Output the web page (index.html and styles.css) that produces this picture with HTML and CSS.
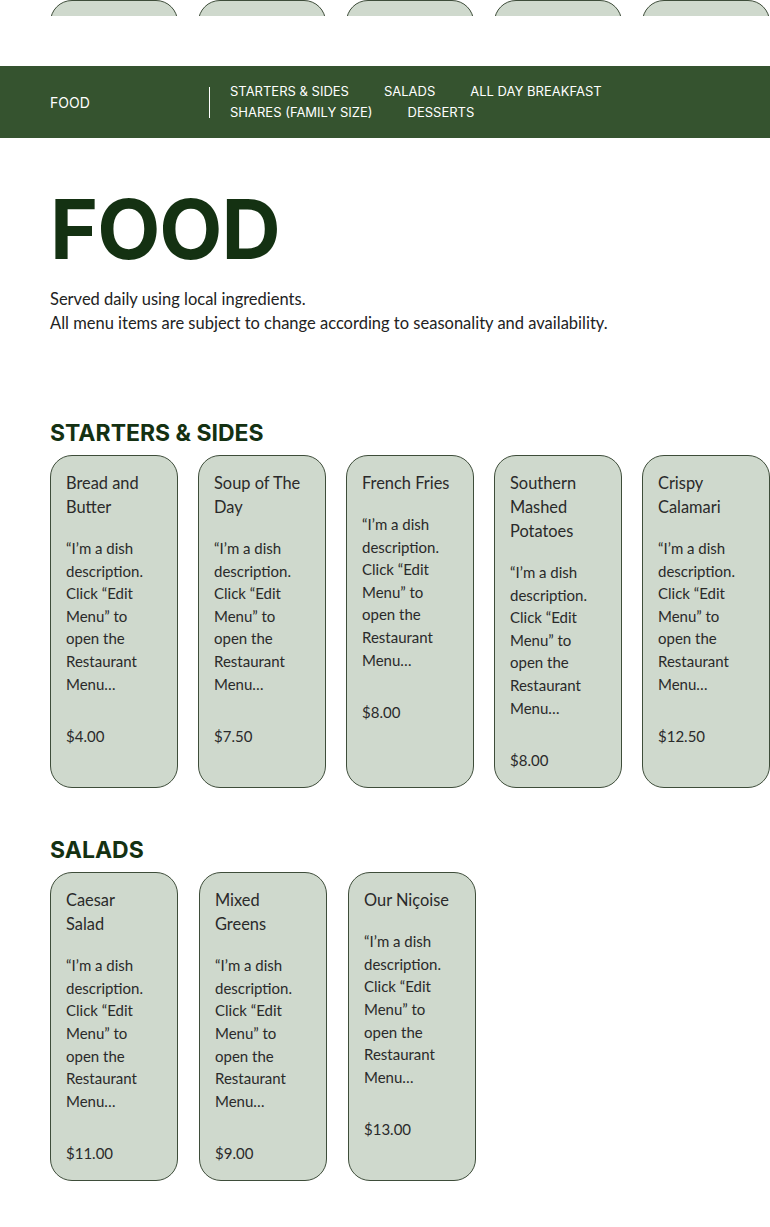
FILE: index.html
```html
<!DOCTYPE html>
<html lang="en">
<head>
<meta charset="utf-8">
<title>Food Menu</title>
<link rel="stylesheet" href="styles.css">
</head>
<body>
  <div class="prev-row">
    <div class="card-stub"></div>
    <div class="card-stub"></div>
    <div class="card-stub"></div>
    <div class="card-stub"></div>
    <div class="card-stub"></div>
  </div>

  <nav class="menu-nav">
    <div class="menu-nav__current">FOOD</div>
    <div class="menu-nav__divider"></div>
    <div class="menu-nav__links">
      <a class="menu-nav__link">STARTERS &amp; SIDES</a>
      <a class="menu-nav__link">SALADS</a>
      <a class="menu-nav__link">ALL DAY BREAKFAST</a>
      <a class="menu-nav__link">SHARES (FAMILY SIZE)</a>
      <a class="menu-nav__link">DESSERTS</a>
    </div>
  </nav>

  <main class="menu">
    <header class="menu__intro">
      <h1 class="menu__title">FOOD</h1>
      <p class="menu__desc">Served daily using local ingredients.<br>All menu items are subject to change according to seasonality and availability.</p>
    </header>

    <section class="menu-section">
      <h2 class="menu-section__title">STARTERS &amp; SIDES</h2>
      <div class="dish-grid">
        <article class="dish">
          <h3 class="dish__name">Bread and Butter</h3>
          <p class="dish__text">“I’m a dish description. Click “Edit Menu” to open the Restaurant Menu…</p>
          <p class="dish__price">$4.00</p>
        </article>
        <article class="dish">
          <h3 class="dish__name">Soup of The Day</h3>
          <p class="dish__text">“I’m a dish description. Click “Edit Menu” to open the Restaurant Menu…</p>
          <p class="dish__price">$7.50</p>
        </article>
        <article class="dish">
          <h3 class="dish__name">French Fries</h3>
          <p class="dish__text">“I’m a dish description. Click “Edit Menu” to open the Restaurant Menu…</p>
          <p class="dish__price">$8.00</p>
        </article>
        <article class="dish">
          <h3 class="dish__name">Southern Mashed Potatoes</h3>
          <p class="dish__text">“I’m a dish description. Click “Edit Menu” to open the Restaurant Menu…</p>
          <p class="dish__price">$8.00</p>
        </article>
        <article class="dish">
          <h3 class="dish__name">Crispy Calamari</h3>
          <p class="dish__text">“I’m a dish description. Click “Edit Menu” to open the Restaurant Menu…</p>
          <p class="dish__price">$12.50</p>
        </article>
      </div>
    </section>

    <section class="menu-section menu-section--salads">
      <h2 class="menu-section__title">SALADS</h2>
      <div class="dish-grid dish-grid--wide">
        <article class="dish">
          <h3 class="dish__name">Caesar Salad</h3>
          <p class="dish__text">“I’m a dish description. Click “Edit Menu” to open the Restaurant Menu…</p>
          <p class="dish__price">$11.00</p>
        </article>
        <article class="dish">
          <h3 class="dish__name">Mixed Greens</h3>
          <p class="dish__text">“I’m a dish description. Click “Edit Menu” to open the Restaurant Menu…</p>
          <p class="dish__price">$9.00</p>
        </article>
        <article class="dish">
          <h3 class="dish__name">Our Niçoise</h3>
          <p class="dish__text">“I’m a dish description. Click “Edit Menu” to open the Restaurant Menu…</p>
          <p class="dish__price">$13.00</p>
        </article>
      </div>
    </section>
  </main>
</body>
</html>
```

FILE: styles.css
```css
* { box-sizing: border-box; }

html, body {
  margin: 0;
  padding: 0;
  background: #ffffff;
}

body {
  font-family: "Lato", "Noto Sans", sans-serif;
  color: #2a2a2a;
  overflow-x: hidden;
}

/* partially visible row from the previous section */
.prev-row {
  height: 16px;
  overflow: hidden;
  display: grid;
  grid-template-columns: repeat(5, 128px);
  column-gap: 20px;
  align-items: end;
  padding-left: 50px;
  width: 770px;
}

.card-stub {
  height: 200px;
  background: #cfd9cd;
  border: 1px solid #3e4d3a;
  border-radius: 22px;
}

/* nav bar */
.menu-nav {
  margin-top: 50px;
  height: 72px;
  background: #35532f;
  display: flex;
  align-items: center;
  padding-left: 50px;
  color: #ffffff;
  font-family: "Inter", "Noto Sans", sans-serif;
}

.menu-nav__current {
  width: 159px;
  font-size: 14px;
}

.menu-nav__divider {
  width: 1px;
  height: 31px;
  background: #ffffff;
  margin-right: 20px;
}

.menu-nav__links {
  display: flex;
  flex-wrap: wrap;
  column-gap: 35px;
  width: 450px;
  font-size: 13px;
  line-height: 21px;
}

.menu-nav__link {
  color: #ffffff;
  text-decoration: none;
}

/* main */
.menu {
  padding-left: 50px;
}

.menu__intro {
  padding-top: 42px;
}

.menu__title {
  margin: 0;
  font-family: "Inter", "Noto Sans", sans-serif;
  font-weight: 700;
  font-size: 82px;
  line-height: 100px;
  color: #143112;
  letter-spacing: -1px;
}

.menu__desc {
  margin: 7px 0 0;
  font-size: 16.5px;
  line-height: 24px;
  color: #222222;
}

.menu-section {
  margin-top: 84px;
}

.menu-section--salads {
  margin-top: 48px;
}

.menu-section__title {
  margin: 0 0 8px;
  font-family: "Inter", "Noto Sans", sans-serif;
  font-weight: 700;
  font-size: 23px;
  line-height: 28px;
  color: #143112;
}

.dish-grid {
  display: grid;
  grid-template-columns: repeat(5, 128px);
  column-gap: 20px;
}

.dish-grid--wide {
  column-gap: 21px;
}

.dish {
  background: #cfd9cd;
  border: 1px solid #3e4d3a;
  border-radius: 22px;
  padding: 15px 22px 16px 15px;
}

.dish__name {
  margin: 0;
  font-weight: 400;
  font-size: 16.4px;
  line-height: 24px;
  color: #2a2a2a;
}

.dish__text {
  margin: 18px 0 0;
  font-size: 15px;
  line-height: 22.6px;
}

.dish__price {
  margin: 30px 0 0;
  font-size: 15px;
  line-height: 22px;
}
```
